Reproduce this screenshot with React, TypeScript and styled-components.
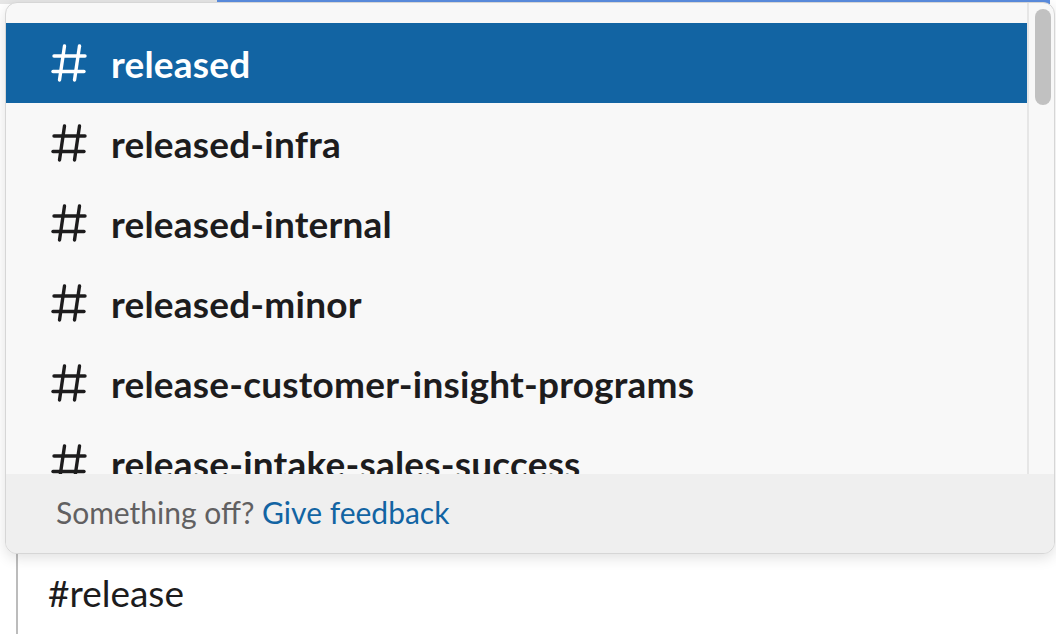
import styled, { createGlobalStyle } from "styled-components";

const GlobalStyle = createGlobalStyle`
  html, body {
    margin: 0;
    padding: 0;
    background: #ffffff;
    font-family: Lato, "Noto Sans", sans-serif;
    overflow: hidden;
  }
`;

const channels = [
  "released",
  "released-infra",
  "released-internal",
  "released-minor",
  "release-customer-insight-programs",
  "release-intake-sales-success",
];

function HashIcon({ color }: { color: string }) {
  return (
    <svg width="36" height="38" viewBox="0 0 36 38" fill="none">
      <g stroke={color} strokeWidth="3.4" strokeLinecap="round">
        <line x1="13.5" y1="2" x2="8.5" y2="36" />
        <line x1="28.5" y1="2" x2="23.5" y2="36" />
        <line x1="3" y1="12" x2="34" y2="12" />
        <line x1="2" y1="27.5" x2="33" y2="27.5" />
      </g>
    </svg>
  );
}

export default function App() {
  return (
    <>
      <GlobalStyle />
      <Page>
        <Backdrop>
          <BackdropGrey />
          <BackdropBlue />
        </Backdrop>
        <Popup>
          <Body>
            <List>
              {channels.map((name, i) => (
                <Row key={name} $active={i === 0}>
                  <HashIcon color={i === 0 ? "#ffffff" : "#1d1c1d"} />
                  <ChannelName>{name}</ChannelName>
                </Row>
              ))}
            </List>
            <Track>
              <Thumb />
            </Track>
          </Body>
          <Footer>
            Something off? <FeedbackLink>Give feedback</FeedbackLink>
          </Footer>
        </Popup>
        <Composer>#release</Composer>
      </Page>
    </>
  );
}

const Page = styled.div`
  position: relative;
  width: 1056px;
  height: 634px;
  display: flex;
  flex-direction: column;
  padding-top: 2px;
  box-sizing: border-box;
`;

const Backdrop = styled.div`
  position: absolute;
  top: 0;
  left: 0;
  right: 0;
  height: 4px;
  display: flex;
`;

const BackdropGrey = styled.div`
  width: 217px;
  background: #e6e6e6;
`;

const BackdropBlue = styled.div`
  flex: 1;
  margin-right: 6px;
  background: #5b8de0;
`;

const Popup = styled.div`
  position: relative;
  margin: 0 1px 0 5px;
  height: 550px;
  display: flex;
  flex-direction: column;
  background: #f8f8f8;
  border: 1px solid #d6d6d6;
  border-radius: 12px;
  overflow: hidden;
  box-shadow: 0 4px 14px rgba(0, 0, 0, 0.12);
`;

const Body = styled.div`
  flex: 1;
  display: flex;
  min-height: 0;
`;

const List = styled.div`
  flex: 1;
  padding-top: 20px;
  overflow: hidden;
`;

const Row = styled.div<{ $active: boolean }>`
  height: 80px;
  flex-shrink: 0;
  display: flex;
  align-items: center;
  gap: 24px;
  padding-left: 45px;
  background: ${(p) => (p.$active ? "#1264a3" : "transparent")};
  color: ${(p) => (p.$active ? "#ffffff" : "#1d1c1d")};
`;

const ChannelName = styled.span`
  font-size: 37px;
  font-weight: 700;
  letter-spacing: 0.2px;
  white-space: nowrap;
`;

const Track = styled.div`
  width: 27px;
  border-left: 2px solid #e6e6e6;
  padding: 6px 4px 0 6px;
  box-sizing: border-box;
`;

const Thumb = styled.div`
  width: 16px;
  height: 96px;
  border-radius: 8px;
  background: #c1c1c1;
`;

const Footer = styled.div`
  height: 79px;
  flex-shrink: 0;
  display: flex;
  align-items: center;
  padding-left: 50px;
  padding-bottom: 4px;
  box-sizing: border-box;
  background: #efefef;
  color: #616061;
  font-size: 30px;
  white-space: pre;
`;

const FeedbackLink = styled.span`
  color: #1264a3;
`;

const Composer = styled.div`
  flex: 1;
  margin-left: 16px;
  border-left: 2px solid #bcbcbc;
  padding: 16px 0 0 30px;
  font-size: 37px;
  color: #1d1c1d;
`;
